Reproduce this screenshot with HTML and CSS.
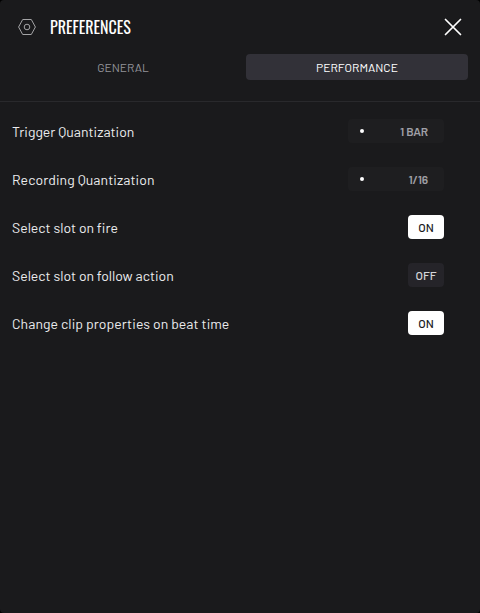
FILE: index.html
```
<!DOCTYPE html>
<html lang="en">
<head>
<meta charset="utf-8">
<title>Preferences</title>
<link rel="stylesheet" href="styles.css">
</head>
<body>
<main class="panel">
  <header class="header">
    <svg class="nut" width="20" height="20" viewBox="0 0 20 20"><path d="M5.7 2.5h8.6L18.4 10l-4.1 7.5H5.7L1.6 10z"/><circle cx="10" cy="10" r="2.8"/></svg>
    <h1 class="title">PREFERENCES</h1>
    <svg class="close" width="18" height="18" viewBox="0 0 18 18"><path d="M1.5 1.5l15 15M16.5 1.5l-15 15"/></svg>
  </header>
  <nav class="tabs">
    <div class="tab">GENERAL</div>
    <div class="tab active">PERFORMANCE</div>
  </nav>
  <section class="settings">
    <div class="row"><span class="label">Trigger Quantization</span><div class="select"><i class="dot"></i><span>1 BAR</span></div></div>
    <div class="row"><span class="label wide">Recording Quantization</span><div class="select"><i class="dot"></i><span>1/16</span></div></div>
    <div class="row"><span class="label">Select slot on fire</span><div class="toggle on">ON</div></div>
    <div class="row"><span class="label">Select slot on follow action</span><div class="toggle">OFF</div></div>
    <div class="row"><span class="label wide">Change clip properties on beat time</span><div class="toggle on">ON</div></div>
  </section>
</main>
</body>
</html>
```
FILE: styles.css
```
* { box-sizing: border-box; }
body { margin: 0; background: #000; font-family: Barlow, Roboto, sans-serif; color: #ececee; }
.panel { height: 613px; background: #1a1a1c; border-radius: 4px; overflow: hidden; }
.header { display: flex; align-items: center; height: 54px; padding: 0 18px 0 17px; }
.nut { fill: none; stroke: #a4a4a6; stroke-width: 1; }
.title { margin: 0 0 0 13px; font: 400 16px/24px Oswald, Roboto, sans-serif; color: #fff; }
.close { margin-left: auto; fill: none; stroke: #fff; stroke-width: 1.7; stroke-linecap: round; }
.tabs { display: flex; height: 48px; padding: 0 12px; border-bottom: 1px solid #29292c; }
.tab { width: 222px; height: 26px; border-radius: 4px; font-size: 12px; line-height: 26px; text-align: center; color: #929298; }
.active { margin-left: 12px; background: #323138; color: #fff; }
.settings { padding: 5px 36px 0 12px; }
.row { display: flex; align-items: center; justify-content: space-between; height: 48px; }
.label { font-size: 14px; line-height: 20px; padding-top: 2px; white-space: nowrap; }
.wide { letter-spacing: .07px; }
.select { display: flex; align-items: center; justify-content: space-between; width: 96px; height: 24px; padding: 0 16px 0 12px; border-radius: 4px; background: #1e1e20; color: #a0a0a7; font-size: 12px; font-weight: 600; line-height: 26px; letter-spacing: -.15px; }
.dot { width: 4px; height: 4px; border-radius: 50%; background: #fff; }
.toggle { width: 36px; height: 24px; border-radius: 4px; background: #252429; color: #d6d6da; font-size: 12px; font-weight: 500; line-height: 24px; text-align: center; }
.on { background: #fff; color: #1a1a1c; }
```
